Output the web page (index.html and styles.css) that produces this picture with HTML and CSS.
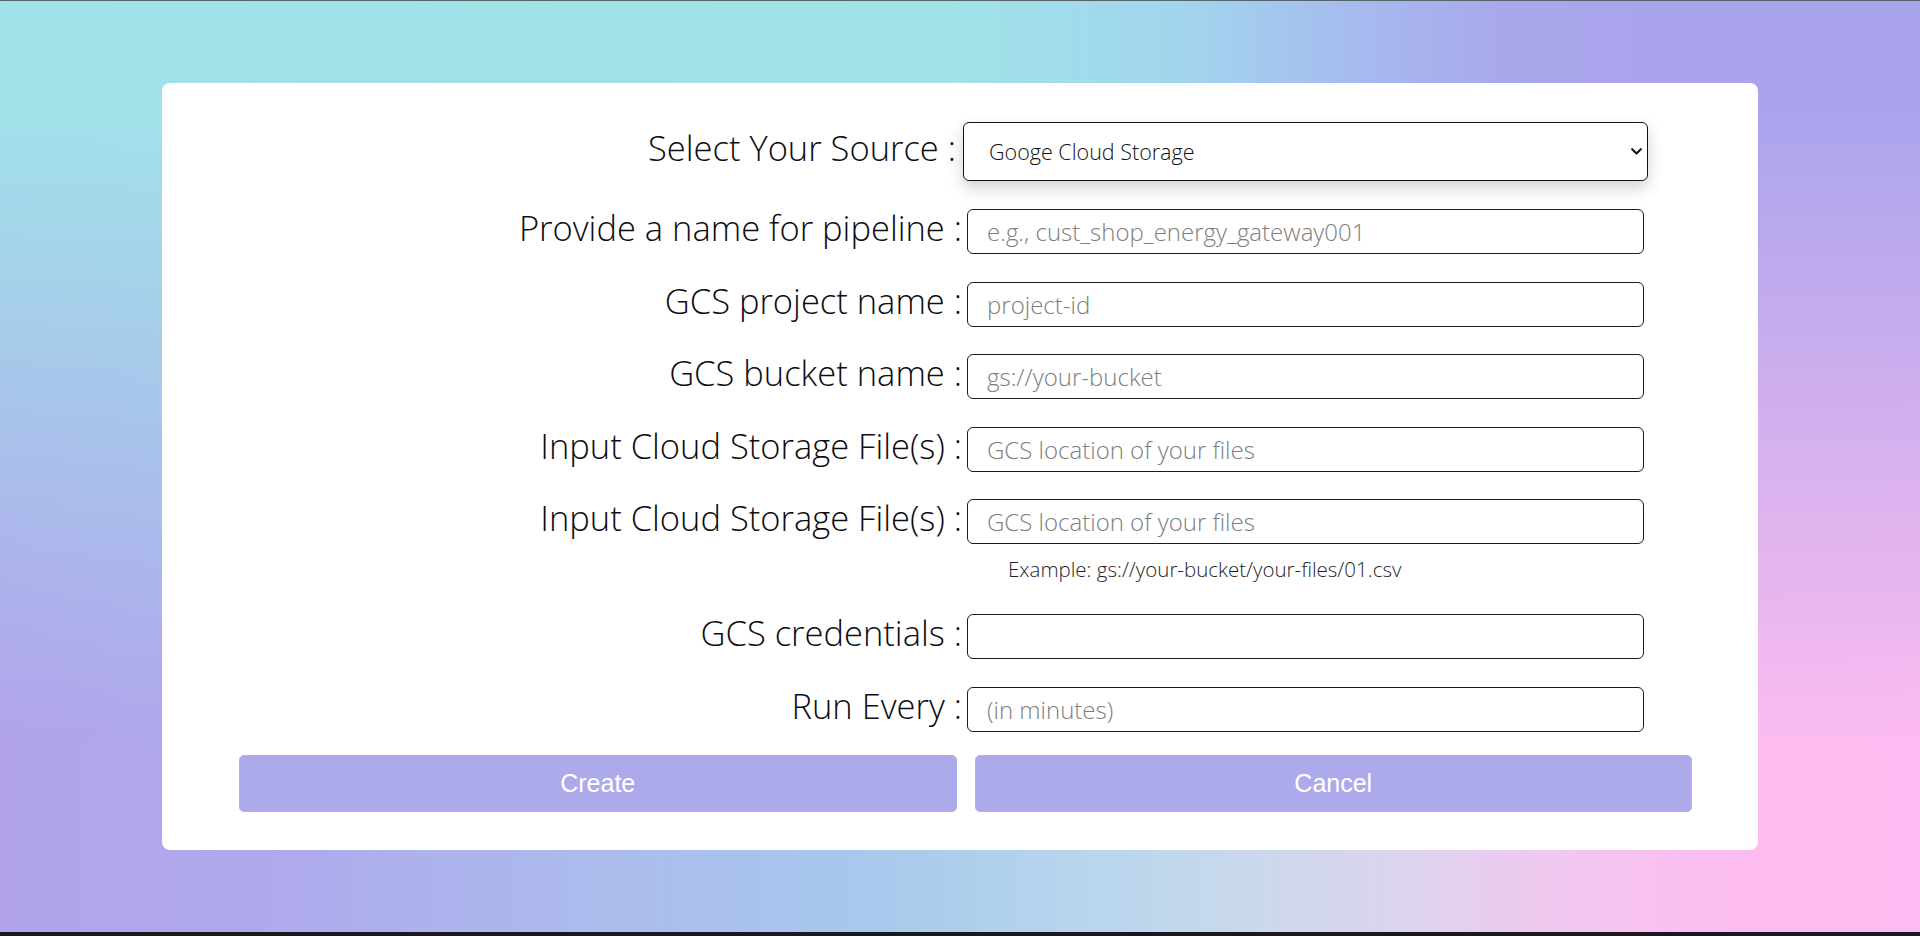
FILE: index.html
```html
<!DOCTYPE html>
<html lang="en">
<head>
<meta charset="utf-8">
<title>Create pipeline</title>
<link rel="stylesheet" href="styles.css">
</head>
<body>
<main class="card">
  <form class="form">
    <div class="row row--select">
      <label class="label" for="source">Select Your Source :</label>
      <div class="select-wrap">
        <select id="source" class="select">
          <option>Googe Cloud Storage</option>
        </select>
        <svg class="chevron" width="11" height="7" viewBox="0 0 11 7" aria-hidden="true"><path d="M1.2 1.2 L5.5 5.4 L9.8 1.2" fill="none" stroke="#111" stroke-width="2.1" stroke-linecap="round" stroke-linejoin="round"/></svg>
      </div>
    </div>
    <div class="row">
      <label class="label" for="name">Provide a name for pipeline :</label>
      <input id="name" class="input" type="text" placeholder="e.g., cust_shop_energy_gateway001">
    </div>
    <div class="row">
      <label class="label" for="project">GCS project name :</label>
      <input id="project" class="input" type="text" placeholder="project-id">
    </div>
    <div class="row">
      <label class="label" for="bucket">GCS bucket name :</label>
      <input id="bucket" class="input" type="text" placeholder="gs://your-bucket">
    </div>
    <div class="row">
      <label class="label" for="files1">Input Cloud Storage File(s) :</label>
      <input id="files1" class="input" type="text" placeholder="GCS location of your files">
    </div>
    <div class="row row--tight">
      <label class="label" for="files2">Input Cloud Storage File(s) :</label>
      <input id="files2" class="input" type="text" placeholder="GCS location of your files">
    </div>
    <div class="row row--hint">
      <p class="hint">Example: gs://your-bucket/your-files/01.csv</p>
    </div>
    <div class="row">
      <label class="label" for="creds">GCS credentials :</label>
      <input id="creds" class="input" type="text">
    </div>
    <div class="row row--last">
      <label class="label" for="every">Run Every :</label>
      <input id="every" class="input" type="text" placeholder="(in minutes)">
    </div>
    <div class="actions">
      <button type="button" class="btn">Create</button>
      <button type="button" class="btn">Cancel</button>
    </div>
  </form>
</main>
</body>
</html>
```
FILE: styles.css
```css
html {
  height: 100%;
  background: #1c1820;
}

body {
  margin: 0;
  min-height: 931px;
  border-top: 1px solid #56646c;
  position: relative;
  isolation: isolate;
  overflow: hidden;
  font-family: "Open Sans", "DejaVu Sans", sans-serif;
  color: #111;
  background: linear-gradient(to right,
    #b2a2ec 0%, #aeaaec 15%, #acbaec 30%, #a8c8ec 45%, #b8d6ec 57%,
    #cad8ec 65%, #dcd4ee 73%, #f2c6f0 82%, #fcbcf0 90%, #fdbcf1 100%);
}

body::before {
  content: "";
  position: absolute;
  inset: 0;
  z-index: -1;
  background: linear-gradient(to right,
    #a1e1e9 0%, #a0e2e8 50%, #a2d4ee 62%, #a6bcee 70%, #a9a8ec 78%,
    #aaa4ec 85%, #aaa4ec 100%);
  -webkit-mask-image: linear-gradient(to bottom, #000 0%, #000 12%, transparent 80%);
  mask-image: linear-gradient(to bottom, #000 0%, #000 12%, transparent 80%);
}

.card {
  box-sizing: border-box;
  width: 1596px;
  margin: 82px auto 0;
  padding: 39px 66px 38px 77px;
  background: #fff;
  border-radius: 8px;
}

.form {
  display: flex;
  flex-direction: column;
}

.row {
  display: grid;
  grid-template-columns: 1fr 677px;
  column-gap: 5px;
  padding-right: 48px;
  margin-bottom: 27.5px;
}

.row--select {
  grid-template-columns: 1fr 685px;
  column-gap: 7px;
  padding-right: 44px;
  margin-bottom: 28px;
}

.row--tight {
  margin-bottom: 13px;
}

.row--hint {
  margin-bottom: 32px;
}

.row--last {
  margin-bottom: 23px;
}

.label {
  align-self: center;
  text-align: right;
  white-space: nowrap;
  font-size: 34.5px;
  font-weight: 350;
  line-height: 37px;
  padding-bottom: 8px;
  color: #0d0d12;
}

.select-wrap {
  position: relative;
}

.select {
  -webkit-appearance: none;
  appearance: none;
  box-sizing: border-box;
  width: 100%;
  height: 59px;
  padding: 0 40px 0 25px;
  border: 1px solid #111;
  border-radius: 6px;
  background: #fff;
  font-family: inherit;
  font-size: 21.5px;
  font-weight: 300;
  color: #111;
  box-shadow: 0 7px 16px rgba(0, 0, 0, 0.18);
}

.chevron {
  position: absolute;
  right: 6px;
  top: 26px;
  pointer-events: none;
}

.input {
  box-sizing: border-box;
  width: 100%;
  height: 45px;
  padding: 0 19px;
  border: 1px solid #1a1a1a;
  border-radius: 6px;
  background: #fff;
  font-family: inherit;
  font-size: 24px;
  font-weight: 300;
  color: #111;
}

.input::placeholder {
  color: #7e7e7e;
}

.hint {
  grid-column: 2;
  margin: 0;
  padding-left: 41px;
  font-size: 20.5px;
  font-weight: 300;
  line-height: 25px;
  color: #1e1e24;
}

.actions {
  display: grid;
  grid-template-columns: 1fr 1fr;
  column-gap: 18px;
}

.btn {
  height: 57px;
  border: 1px solid #a5b6ea;
  border-radius: 5px;
  background: #adaaeb;
  color: #fff;
  font-family: "Liberation Sans", Arial, sans-serif;
  font-size: 25px;
}
```
